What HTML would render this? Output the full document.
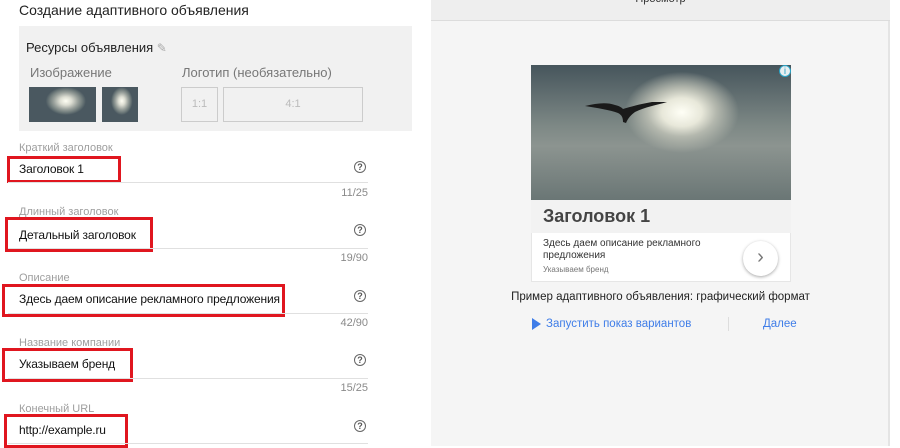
<!DOCTYPE html>
<html><head><meta charset="utf-8"><style>
*{margin:0;padding:0;box-sizing:border-box}
body{width:900px;height:446px;overflow:hidden;background:#fff;font-family:"Liberation Sans",Arial,sans-serif;position:relative;color:#212121}
.a{position:absolute}
.lbl{position:absolute;font-size:11px;color:#9e9e9e}
.val{position:absolute;font-size:12px;letter-spacing:-0.15px;color:#111}
.red{position:absolute;border:3px solid #e0161f}
.ul{position:absolute;left:8px;width:360px;height:1px;background:#e0e0e0}
.cnt{position:absolute;right:532px;font-size:11px;color:#8a8a8a}
.q{position:absolute;left:354px;width:12px;height:12px;border:1.3px solid #666;border-radius:50%;font-size:9px;line-height:10px;text-align:center;color:#555;font-weight:bold}
.sky{background:radial-gradient(ellipse 30% 40% at 55% 40%,#fffff4 0%,#dcddd2 30%,#9aa19c 60%,#6f7b7b 82%,#4a5860 100%)}
</style></head><body>
<div class="a" style="left:19px;top:2px;font-size:14px;color:#222">Создание адаптивного объявления</div>
<div class="a" style="left:19px;top:26px;width:393px;height:105px;background:#f1f1f1"></div>
<div class="a" style="left:26px;top:40px;font-size:13px;color:#222">Ресурсы объявления <span style="color:#aaa;font-size:12px">✎</span></div>
<div class="a" style="left:30px;top:65px;font-size:13px;color:#777">Изображение</div>
<div class="a" style="left:182px;top:65px;font-size:13px;color:#777">Логотип (необязательно)</div>
<div class="a sky" style="left:29px;top:87px;width:67px;height:35px"></div>
<div class="a sky" style="left:102px;top:87px;width:36px;height:35px"></div>
<div class="a" style="left:181px;top:87px;width:37px;height:35px;border:1px solid #ccc;font-size:11px;color:#bbb;text-align:center;line-height:33px">1:1</div>
<div class="a" style="left:223px;top:87px;width:140px;height:35px;border:1px solid #ccc;font-size:11px;color:#bbb;text-align:center;line-height:33px">4:1</div>

<div class="lbl" style="left:19px;top:142px">Краткий заголовок</div>
<div class="red" style="left:7px;top:156px;width:114px;height:27px"></div>
<div class="val" style="left:19px;top:162px">Заголовок 1</div>
<div class="q" style="top:161px">?</div>
<div class="ul" style="top:182px"></div>
<div class="cnt" style="top:187px">11/25</div>

<div class="lbl" style="left:19px;top:206px">Длинный заголовок</div>
<div class="red" style="left:5px;top:217px;width:148px;height:35px"></div>
<div class="val" style="left:19px;top:228px">Детальный заголовок</div>
<div class="q" style="top:224px">?</div>
<div class="ul" style="top:248px"></div>
<div class="cnt" style="top:252px">19/90</div>

<div class="lbl" style="left:19px;top:272px">Описание</div>
<div class="red" style="left:2px;top:284px;width:283px;height:33px"></div>
<div class="val" style="left:19px;top:292px">Здесь даем описание рекламного предложения</div>
<div class="q" style="top:290px">?</div>
<div class="ul" style="top:313px"></div>
<div class="cnt" style="top:317px">42/90</div>

<div class="lbl" style="left:19px;top:337px">Название компании</div>
<div class="red" style="left:2px;top:348px;width:131px;height:34px"></div>
<div class="val" style="left:19px;top:357px">Указываем бренд</div>
<div class="q" style="top:354px">?</div>
<div class="ul" style="top:378px"></div>
<div class="cnt" style="top:382px">15/25</div>

<div class="lbl" style="left:19px;top:403px">Конечный URL</div>
<div class="red" style="left:4px;top:414px;width:124px;height:34px"></div>
<div class="val" style="left:19px;top:423px">http://example.ru</div>
<div class="q" style="top:420px">?</div>
<div class="ul" style="top:443px"></div>

<div class="a" style="left:431px;top:0;width:459px;height:446px;background:#f5f5f5;border-right:2px solid #e4e4e4"></div>
<div class="a" style="left:431px;top:0;width:459px;height:21px;background:#eeeeee;border-bottom:1px solid #dcdcdc"></div>
<div class="a" style="left:431px;top:-7px;width:459px;text-align:center;font-size:11px;color:#333">Просмотр</div>

<div class="a" style="left:531px;top:65px;width:260px;height:217px;border:1px solid #e6e6e6;background:#fff"></div>
<div class="a" style="left:531px;top:65px;width:260px;height:135px;background:radial-gradient(ellipse 22% 30% at 58% 35%,#fffff6 0%,#e8e8da 35%,#b4b8ae 60%,rgba(140,150,146,0) 100%),linear-gradient(180deg,#46555c 0%,#7d8885 45%,#8c9490 60%,#6a7675 100%)"></div>
<svg class="a" style="left:585px;top:96px" width="90" height="30" viewBox="0 0 90 30"><path d="M0 10 C12 7 22 6 30 9 C34 10 36 11 38 13 C45 11 55 8 67 6 L82 6 C72 9 60 11 50 16 C46 19 43 22 41 27 L38 26 C38 22 37 19 33 17 C25 14 12 12 0 10Z" fill="#1a1a1a"/></svg>
<div class="a" style="left:779px;top:65px;width:12px;height:12px;background:#e8eef0;color:#2aa5c8;font-size:10px;text-align:center;line-height:12px;border-radius:50%;border:1px solid #2aa5c8">i</div>
<div class="a" style="left:531px;top:200px;width:260px;height:33px;background:#f2f2f2"></div>
<div class="a" style="left:543px;top:206px;font-size:18px;font-weight:bold;color:#444">Заголовок 1</div>
<div class="a" style="left:543px;top:238px;font-size:10px;color:#333;line-height:12px;width:190px">Здесь даем описание рекламного предложения</div>
<div class="a" style="left:543px;top:265px;font-size:8px;color:#777">Указываем бренд</div>
<div class="a" style="left:743px;top:241px;width:35px;height:35px;border-radius:50%;background:#fff;box-shadow:0 1px 3px rgba(0,0,0,.35);color:#777;font-size:20px;text-align:center;line-height:33px">›</div>

<div class="a" style="left:431px;top:291px;width:459px;text-align:center;font-size:11.5px;color:#222">Пример адаптивного объявления: графический формат</div>
<div class="a" style="left:532px;top:318px;width:0;height:0;border-top:6px solid transparent;border-bottom:6px solid transparent;border-left:9px solid #3f7de8"></div>
<div class="a" style="left:546px;top:318px;font-size:11.5px;color:#3f7de8">Запустить показ вариантов</div>
<div class="a" style="left:728px;top:317px;width:1px;height:14px;background:#ddd"></div>
<div class="a" style="left:763px;top:318px;font-size:11.5px;color:#3f7de8">Далее</div>
</body></html>
